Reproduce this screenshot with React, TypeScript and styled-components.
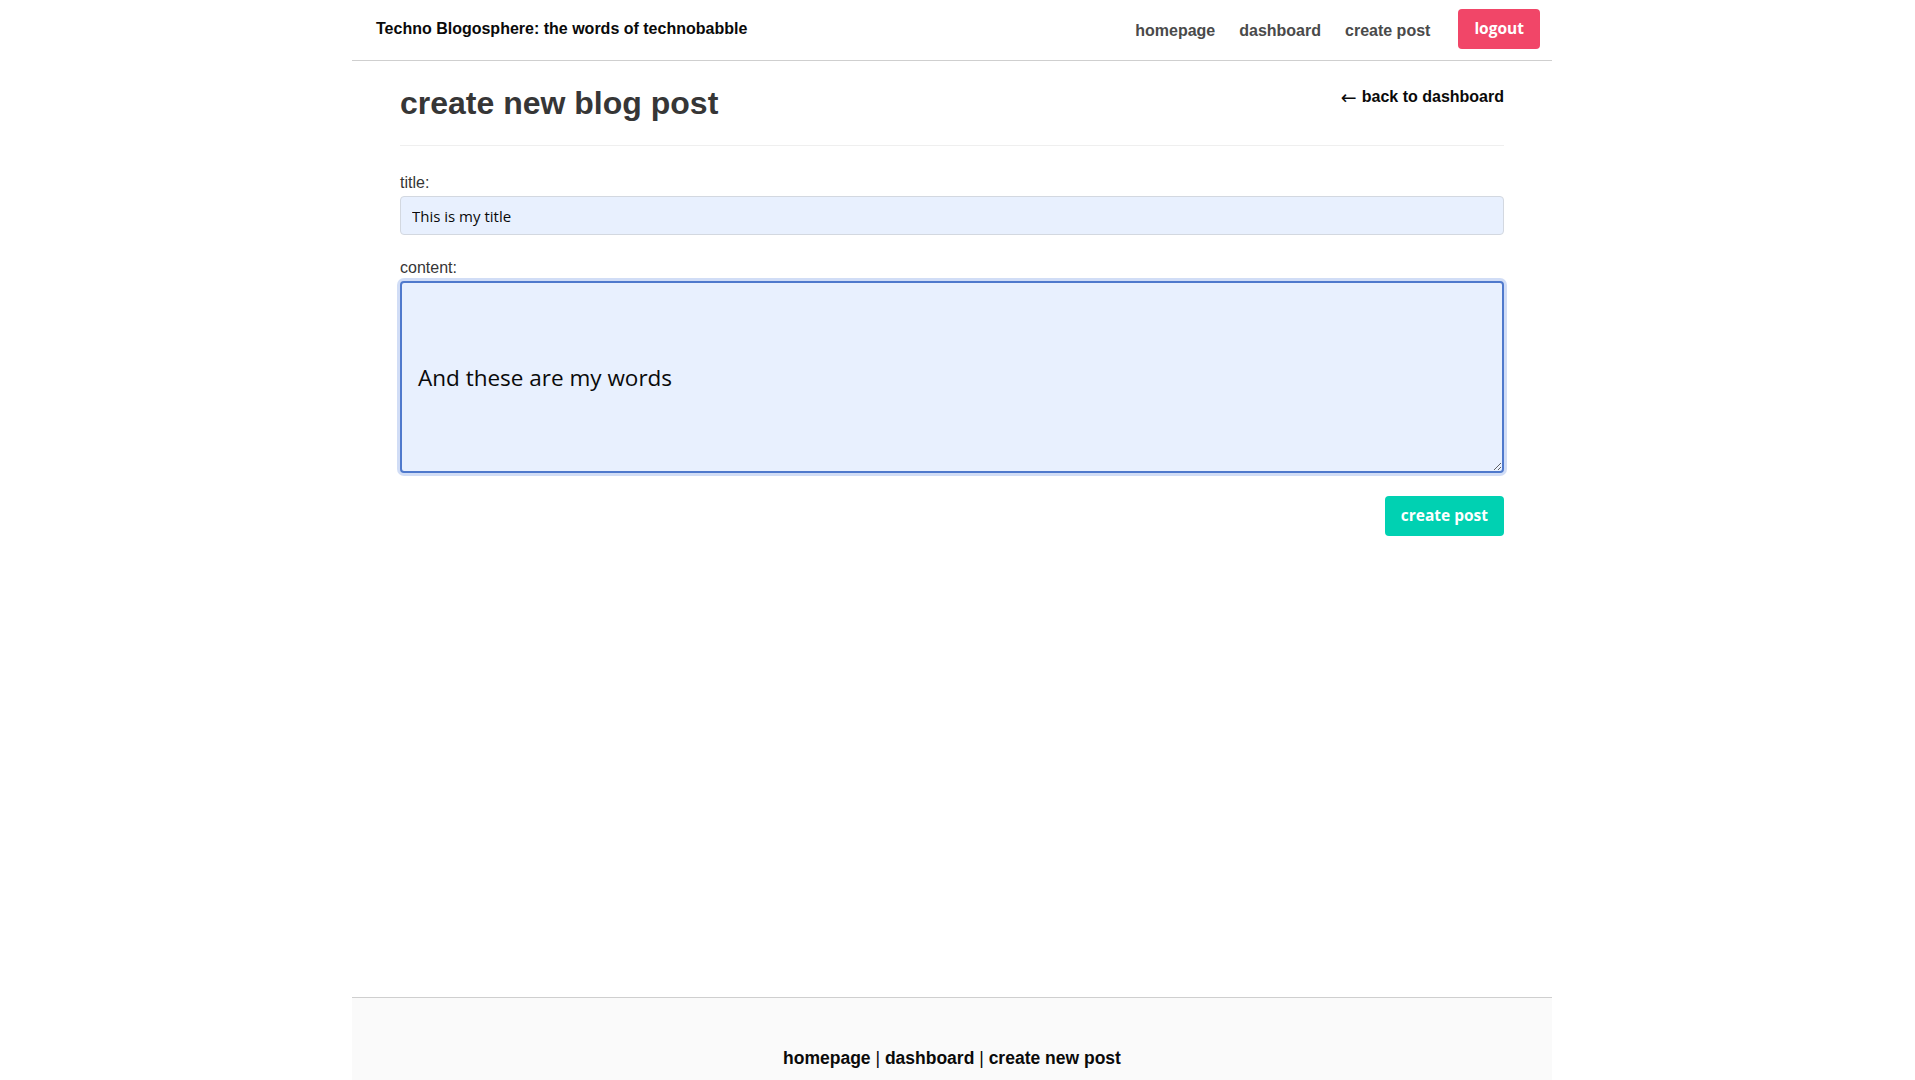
import React from "react";
import styled, { createGlobalStyle } from "styled-components";

const GlobalStyle = createGlobalStyle`
  html, body {
    margin: 0;
    padding: 0;
    background: #ffffff;
  }
  body {
    font-family: "Liberation Sans", Arial, sans-serif;
    color: #4a4a4a;
    padding-right: 11px;
  }
  * { box-sizing: border-box; }
`;

const uiFont = `"Open Sans", "Noto Sans", sans-serif`;

const Page = styled.div`
  max-width: 1200px;
  margin: 0 auto;
`;

const Header = styled.header`
  height: 61px;
  border-bottom: 1px solid #cfcfcf;
  display: flex;
  align-items: center;
  justify-content: space-between;
  padding: 0 0 0 24px;
`;

const Brand = styled.a`
  font-size: 16px;
  font-weight: 700;
  color: #0a0a0a;
  text-decoration: none;
  margin-top: -3px;
`;

const Nav = styled.nav`
  display: flex;
  align-items: center;
  height: 100%;
`;

const NavLink = styled.a`
  font-size: 16px;
  font-weight: 700;
  color: #4a4a4a;
  text-decoration: none;
  padding: 0 12px;
  line-height: 24px;
  margin-top: 1px;
`;

const NavButtonWrap = styled.div`
  padding: 0 12px 0 16px;
  margin-top: -3px;
`;

const Button = styled.button<{ $tone: "danger" | "primary" }>`
  font-family: ${uiFont};
  font-size: 15.5px;
  font-weight: 700;
  color: #ffffff;
  background: ${(p) => (p.$tone === "danger" ? "#f14668" : "#00d1b2")};
  border: 1px solid transparent;
  border-radius: 4px;
  height: 40px;
  padding: 0 15px;
  cursor: pointer;
  line-height: 1;
`;

const Main = styled.main`
  min-height: 936px;
  padding: 24px 48px;
`;

const TopRow = styled.div`
  display: flex;
  justify-content: space-between;
  align-items: flex-start;
  padding-bottom: 24px;
  border-bottom: 1px solid #efefef;
`;

const Heading = styled.h1`
  margin: 0;
  font-size: 32px;
  line-height: 36px;
  font-weight: 700;
  color: #363636;
`;

const BackLink = styled.a`
  font-size: 16px;
  font-weight: 700;
  line-height: 24px;
  color: #0a0a0a;
  text-decoration: none;
  display: flex;
  align-items: center;
`;

const Arrow = styled.span`
  font-family: "DejaVu Sans", sans-serif;
  font-weight: 400;
  font-size: 19px;
  line-height: 24px;
  margin-right: 5px;
`;

const Form = styled.form`
  margin-top: 25px;
  display: flex;
  flex-direction: column;
`;

const Field = styled.div`
  display: flex;
  flex-direction: column;
  margin-bottom: 21px;
`;

const Label = styled.label`
  font-size: 16px;
  line-height: 24px;
  color: #363636;
  margin-bottom: 1px;
`;

const Input = styled.input`
  font-family: ${uiFont};
  font-size: 15px;
  color: #0a0a0a;
  height: 39px;
  padding: 0 11px;
  background: #e8f0fe;
  border: 1px solid #d3d8e0;
  border-radius: 4px;
  outline: none;
`;

const TextArea = styled.textarea`
  font-family: ${uiFont};
  font-size: 22.5px;
  line-height: 30px;
  color: #0a0a0a;
  height: 192px;
  padding: 80px 16px 0;
  background: #e8f0fe;
  border: 2px solid #4f79cc;
  border-radius: 4px;
  box-shadow: 0 0 0 3px rgba(72, 120, 220, 0.25);
  outline: none;
  resize: vertical;
`;

const Actions = styled.div`
  display: flex;
  justify-content: flex-end;
  margin-top: 2px;
`;

const Footer = styled.footer`
  background: #fafafa;
  border-top: 1px solid #cfcfcf;
  padding: 47px 24px 96px;
  text-align: center;
  font-size: 17.5px;
  line-height: 27px;
  color: #0a0a0a;
`;

const FooterLink = styled.a`
  font-weight: 700;
  color: #0a0a0a;
  text-decoration: none;
`;

const Sep = styled.span`
  font-weight: 400;
  color: #0a0a0a;
`;

export default function App() {
  return (
    <>
      <GlobalStyle />
      <Page>
        <Header>
          <Brand href="#">Techno Blogosphere: the words of technobabble</Brand>
          <Nav>
            <NavLink href="#">homepage</NavLink>
            <NavLink href="#">dashboard</NavLink>
            <NavLink href="#">create post</NavLink>
            <NavButtonWrap>
              <Button $tone="danger" type="button">logout</Button>
            </NavButtonWrap>
          </Nav>
        </Header>
        <Main>
          <TopRow>
            <Heading>create new blog post</Heading>
            <BackLink href="#">
              <Arrow>←</Arrow>back to dashboard
            </BackLink>
          </TopRow>
          <Form onSubmit={(e) => e.preventDefault()}>
            <Field>
              <Label htmlFor="title">title:</Label>
              <Input id="title" defaultValue="This is my title" />
            </Field>
            <Field>
              <Label htmlFor="content">content:</Label>
              <TextArea id="content" defaultValue="And these are my words" />
            </Field>
            <Actions>
              <Button $tone="primary" type="submit">create post</Button>
            </Actions>
          </Form>
        </Main>
        <Footer>
          <FooterLink href="#">homepage</FooterLink>
          <Sep> | </Sep>
          <FooterLink href="#">dashboard</FooterLink>
          <Sep> | </Sep>
          <FooterLink href="#">create new post</FooterLink>
        </Footer>
      </Page>
    </>
  );
}
